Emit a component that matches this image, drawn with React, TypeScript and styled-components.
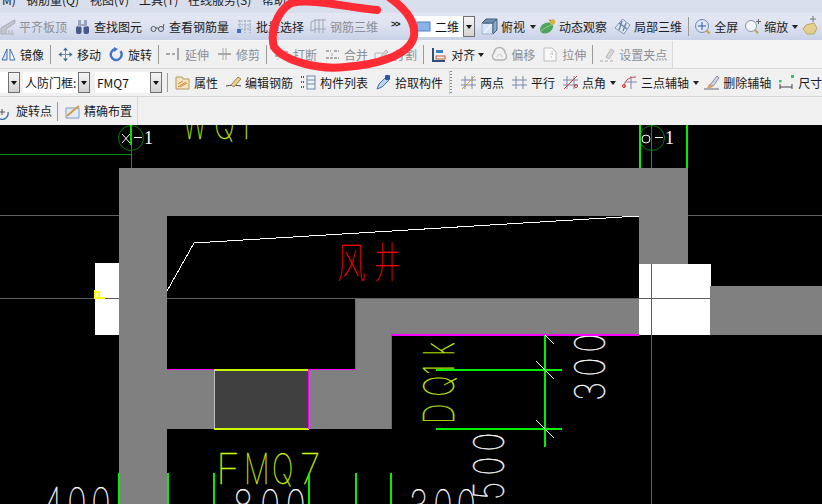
import React from "react";
import styled, { createGlobalStyle } from "styled-components";

const Global = createGlobalStyle`
  html, body { margin: 0; padding: 0; background: #000; overflow: hidden; }
  body { width: 822px; height: 504px; }
`;

const Page = styled.div`
  position: relative;
  width: 822px;
  height: 504px;
  overflow: hidden;
  display: flex;
  flex-direction: column;
  font-family: "Noto Sans CJK SC", "Liberation Sans", sans-serif;
  font-size: 12px;
  color: #1c1c1c;
  background: #f0f0f0;
`;

const MenuBar = styled.div`
  height: 13px;
  flex: none;
  display: flex;
  align-items: flex-start;
  overflow: hidden;
  background: #d9deec;
  padding-left: 2px;
`;

const MenuItem = styled.span<{ $w: number }>`
  flex: none;
  width: ${(p) => p.$w}px;
  line-height: 15px;
  height: 15px;
  margin-top: -8px;
  white-space: nowrap;
  color: #222;
`;

const Bar = styled.div<{ $h: number; $end?: number }>`
  height: ${(p) => p.$h}px;
  flex: none;
  width: ${(p) => (p.$end ? `${p.$end}px` : "822px")};
  box-sizing: border-box;
  display: flex;
  align-items: center;
  overflow: hidden;
  white-space: nowrap;
  gap: 8px;
`;

const MainBar = styled(Bar)`
  background: linear-gradient(#e3e7f3, #dfe4f1 40%, #c8d1e7);
  border-bottom: 1px solid #f4f6fb;
  padding-left: 0;
`;

const EditBar = styled(Bar)`
  background: #f0f0f0;
  border-right: 1px solid #dadada;
  padding-left: 1px;
`;

const RowWrap = styled.div`
  flex: none;
  background: #f4f4f4;
  border-bottom: 1px solid #d9d9d9;
`;

const DrawBar = styled(Bar)`
  background: #f0f0f0;
  border-bottom: 1px solid #d7d7d7;
`;

const LastBar = styled(Bar)`
  background: #f0f0f0;
  border-right: 1px solid #d9d9d9;
  padding-left: 0;
`;

const LastWrap = styled.div`
  height: 28px;
  flex: none;
  background: #f0f0f0;
`;

const Tool = styled.span<{ $off?: boolean; $lead?: number }>`
  flex: none;
  display: inline-flex;
  align-items: center;
  gap: 4px;
  margin-left: ${(p) => p.$lead ?? 0}px;
  color: ${(p) => (p.$off ? "#8b8f98" : "#1c1c24")};
  line-height: 16px;
`;

const IconBox = styled.svg`
  flex: none;
  width: 15px;
  height: 15px;
  display: block;
  overflow: visible;
`;

const Sep = styled.span<{ $lead?: number }>`
  flex: none;
  width: 1px;
  height: 19px;
  margin: 0 0 0 ${(p) => p.$lead ?? -2}px;
  background: #9a9a9a;
`;

const Caret = styled.span<{ $lead?: number }>`
  flex: none;
  width: 0;
  height: 0;
  margin-left: ${(p) => p.$lead ?? -3}px;
  border-left: 3.5px solid transparent;
  border-right: 3.5px solid transparent;
  border-top: 4px solid #222;
`;

const More = styled.span`
  flex: none;
  width: 10px;
  margin-left: 5px;
  margin-top: -6px;
  font: bold 9px/10px "Liberation Sans", sans-serif;
  letter-spacing: -1px;
  color: #111;
`;

const Combo = styled.span<{ $w: number; $lead?: number }>`
  flex: none;
  box-sizing: border-box;
  width: ${(p) => p.$w}px;
  height: 21px;
  margin-left: ${(p) => p.$lead ?? 0}px;
  display: flex;
  align-items: center;
  background: #fff;
  overflow: hidden;
`;

const ComboText = styled.span`
  flex: 1;
  min-width: 0;
  overflow: hidden;
  padding-left: 2px;
  color: #111;
  display: flex;
  align-items: center;
  gap: 4px;
`;

const ComboBtn = styled.span`
  flex: none;
  box-sizing: border-box;
  width: 12px;
  height: 21px;
  border: 1px solid #6f6f6f;
  background: linear-gradient(#f6f6f6, #d2d2d2);
  display: flex;
  align-items: center;
  justify-content: center;
  &::after {
    content: "";
    border-left: 3.5px solid transparent;
    border-right: 3.5px solid transparent;
    border-top: 4px solid #111;
  }
`;

const Grip = styled.span`
  flex: none;
  width: 2px;
  height: 24px;
  margin: 0 2px 0 -2px;
  border-left: 1px solid #d0d0d0;
  background: repeating-linear-gradient(#8a8a8a 0 1px, transparent 1px 3px);
`;

const Canvas = styled.svg`
  display: block;
  flex: none;
  width: 822px;
  height: 379px;
  background: #000;
`;

const CadText = styled.text<{ $c?: string }>`
  font-family: Inter, "Liberation Sans", sans-serif;
  font-weight: 100;
  font-size: 42px;
  fill: ${(p) => p.$c ?? "#fff"};
  stroke: ${(p) => p.$c ?? "#fff"};
  stroke-width: 0.35;
`;

const RedText = styled.text`
  font-family: "Noto Sans CJK SC", sans-serif;
  font-weight: 100;
  font-size: 42px;
  fill: #f00;
`;

const AxisText = styled.text`
  font-family: "Liberation Serif", serif;
  font-size: 18px;
  fill: #fff;
`;

const Annotation = styled.svg`
  position: absolute;
  left: 0;
  top: 0;
  pointer-events: none;
`;

const S = ({ children }: { children: React.ReactNode }) => (
  <IconBox viewBox="0 0 15 15" fill="none" strokeWidth="1">
    {children}
  </IconBox>
);

const icons: Record<string, React.ReactNode> = {
  level: <><path d="M1 15V9l10-6 4-2v3l-9 6v5z" fill="#c3c7cd" stroke="#a8acb2" /><path d="M7 15h7M9 11v3M12 11v3" stroke="#a8acb2" /></>,
  find: <><rect x="1" y="7" width="5.500" height="8" rx="2" fill="#46598a" /><rect x="8.500" y="7" width="5.500" height="8" rx="2" fill="#46598a" /><rect x="3" y="1" width="3" height="7" fill="#9aa5c0" /><rect x="9" y="1" width="3" height="7" fill="#9aa5c0" /><path d="M6 6h3" stroke="#666" /></>,
  glasses: <><circle cx="3.500" cy="10" r="2.500" stroke="#555" /><circle cx="11" cy="10" r="2.500" stroke="#555" /><path d="M6 9h2.500M13 9l1-4" stroke="#555" /></>,
  batch: <><path d="M1 2h13M1 6h13M1 10h13M3 1v13M8 1v13M13 1v13" stroke="#9ba6bd" strokeDasharray="2 1" /><rect x="0" y="10" width="4" height="4" fill="#3f6fc4" /></>,
  rebar: <><path d="M0 3l5-2h10M0 12l5-2h10M4 0v14M8 0v14M12 0v14M0 3v9" stroke="#9ea6b8" /></>,
  cube: <><path d="M0 4l4-4h11v11l-4 4H0z" fill="#d7e6f4" /><path d="M0 4h11v11M11 4l4-4" stroke="#45607e" /><path d="M0 4l4-4h11l-4 4z" fill="#6d8fb0" stroke="#45607e" /><path d="M11 4l4-4v11l-4 4z" fill="#8eaac6" stroke="#45607e" /><path d="M0 4v11h11" stroke="#9cb4cc" /><path d="M2 14L10 5" stroke="#fff" /></>,
  orbit: <><ellipse cx="6.500" cy="9" rx="7" ry="5" fill="#4ea55e" transform="rotate(-28 6.500 9)" /><path d="M1 12C4 9 9 7 13 5" stroke="#9fd08f" /><circle cx="12.500" cy="3" r="2.800" fill="#d0b848" /><path d="M9 1l2 1" stroke="#8a7a30" /></>,
  local3d: <><path d="M7.500 0l7.500 6-6 9-9-6z" fill="#dfe8f6" stroke="#7d95ba" /><path d="M4 4l8 6M7 2L4 11M11 4l-3 8" stroke="#6b83a8" strokeWidth="1.400" /></>,
  fullscreen: <><circle cx="7" cy="7" r="6.500" fill="#dce6f6" stroke="#7089b0" /><path d="M7 3v8M3 7h8" stroke="#2c5aa0" /><path d="M11.500 11.500l3 3" stroke="#c9a23c" strokeWidth="2" /></>,
  zoom: <><circle cx="6" cy="7" r="5.500" fill="#f2f5fa" stroke="#8a97aa" /><path d="M10 11l3 3" stroke="#c9a23c" strokeWidth="2" /><path d="M13.500 0v5M11 2.500h5" stroke="#666" /></>,
  hand: <><path d="M1 10l3-4 8-2 3 5-3 6H5z" fill="#e3cf8e" stroke="#c0a860" /><path d="M11 -3v6M8 0h6" stroke="#778" /></>,
  mirror: <><path d="M6 2v11H1z" stroke="#3f6fb0" fill="#d8e4f4" /><path d="M9 2v11h5z" stroke="#3f6fb0" fill="#fff" /></>,
  move: <><path d="M7.500 1v13M1 7.500h13" stroke="#6d8db0" /><path d="M5 3.500l2.500-3 2.500 3zM5 11.500l2.500 3 2.500-3zM3.500 5l-3 2.500 3 2.500zM11.500 5l3 2.500-3 2.500z" fill="#3d6a9c" /></>,
  rotate: <><path d="M11.500 4a5.500 5.500 0 1 1-5-2" stroke="#3f74c8" strokeWidth="2.400" /><path d="M5 0l4 2-4 3z" fill="#3f74c8" /></>,
  extend: <><path d="M0 7h4M6 7h3" stroke="#a8a8a8" strokeWidth="2" /><path d="M12 1v12" stroke="#a8a8a8" strokeWidth="2" /></>,
  trim: <><path d="M1 7h13" stroke="#a8a8a8" strokeWidth="2" /><path d="M6 1v12M9 1v12" stroke="#a8a8a8" /></>,
  breakl: <><path d="M1 9h5M9 5h5" stroke="#adadad" strokeWidth="2" /><path d="M3 13l9-10" stroke="#c4c4c4" /></>,
  merge: <><path d="M1 4h5M9 4h5M1 11h13" stroke="#adadad" strokeWidth="2" strokeDasharray="3 1" /><path d="M7 6v3" stroke="#adadad" /></>,
  split: <><path d="M1 13V6h8" stroke="#b8b8b8" /><path d="M5 12l7-9 2 2-7 8z" fill="#d8d8d8" stroke="#b0b0b0" /></>,
  align: <><path d="M1 1v13h12" stroke="#2c4f80" strokeWidth="2" /><rect x="4" y="3" width="7" height="3" fill="#3c7fc4" /><rect x="4" y="9" width="9" height="3" stroke="#c05a3a" /></>,
  offset: <><path d="M3 13a4 4 0 0 1-1-7 5.500 5.500 0 0 1 11 0 4 4 0 0 1-1 7z" stroke="#b4b4b4" strokeWidth="1.500" /><path d="M5 10a2 2 0 0 1 5 0" stroke="#c8c8c8" /></>,
  stretch: <><path d="M1 1h8l4 4v9H1z" stroke="#bdbdbd" fill="#f8f8f8" /><path d="M7 7h3M8 10h2M9 4v3" stroke="#aaa" strokeDasharray="1 1" /></>,
  grip: <><path d="M0 14h3M5 14h3M10 14h3" stroke="#aaa" /><path d="M6 10l5-8 3 2-5 8z" fill="#d9d9d9" stroke="#b5b5b5" /></>,
  prop: <><path d="M1 2h6l1 2h6v10H1z" fill="#f8e3bc" stroke="#b49660" /><path d="M3 12l8-5M5 12l7-4M3 9l5-3" stroke="#c98c3a" /></>,
  edit: <><path d="M0 11c4-1 10-1 15 0" stroke="#444" /><path d="M5 10l7-8 3 2-7 8z" fill="#e8d285" stroke="#9a8a55" /></>,
  list: <><path d="M0 2h3M0 7h3M0 12h3" stroke="#555" strokeDasharray="1 1" strokeWidth="2" /><rect x="6" y="1" width="8" height="13" stroke="#6c86ab" fill="#eef3fa" /><path d="M6 5h8M6 9h8" stroke="#6c86ab" /></>,
  pick: <><path d="M1 14l2-5 7-7 3 3-7 7z" fill="#bcd4f2" stroke="#3f6fb0" /><rect x="9" y="0" width="5" height="5" rx="1" fill="#2b5aa0" /></>,
  twoPt: <><path d="M4 1v13M11 1v13M0 5h15M0 10h15" stroke="#7d86aa" /><path d="M1 14L14 1" stroke="#c6a23c" /></>,
  parallel: <><path d="M4 1v13M11 1v13M0 5h15M0 10h15" stroke="#7d86aa" /></>,
  angle: <><path d="M4 1v13M11 1v13M0 5h15M0 10h15" stroke="#7d86aa" /><path d="M1 14L14 1" stroke="#cc3a3a" /><circle cx="13" cy="11" r="1.500" stroke="#cc3a3a" /></>,
  arc: <><path d="M2 13C2 6 6 2 14 2" stroke="#cc3a3a" /><path d="M9 1v13M3 7h12" stroke="#7d86aa" /><circle cx="2" cy="11" r="1.500" stroke="#cc3a3a" /></>,
  del: <><path d="M0 14h15" stroke="#667" /><path d="M6 10l7-9 2 2-6 8z" fill="#cfd8e8" stroke="#8a8a9a" /><path d="M3 13l2-4 4 2-2 2z" fill="#e0a070" /></>,
  dim: <><path d="M1 9v5M13 9v5M1 12h12" stroke="#444" /><rect x="0" y="5" width="2.500" height="2.500" fill="#36c46a" /><rect x="12" y="0" width="3" height="3" fill="#36c46a" /></>,
  pivot: <><path d="M1 5a6 6 0 1 0 10 3" stroke="#3f6fb0" strokeWidth="1.400" /><path d="M5 5v6M2 8h6" stroke="#555" /></>,
  place: <><path d="M1 4h13v10H1z" fill="#dfeafa" stroke="#7f9cc4" /><path d="M2 12l8-7 4-3" stroke="#d0a040" strokeWidth="2" /></>,
};

const T = ({ i, t, off, lead }: { i: string; t: string; off?: boolean; lead?: number }) => (
  <Tool $off={off} $lead={lead}>
    <S>{icons[i]}</S>
    {t}
  </Tool>
);

const Line = ({ d, c, w = 1 }: { d: string; c: string; w?: number }) => (
  <path d={d} stroke={c} strokeWidth={w} fill="none" shapeRendering="crispEdges" />
);

const App = () => (
  <Page>
    <Global />
    <MenuBar>
      <MenuItem $w={24}>M)</MenuItem>
      <MenuItem $w={64}>钢筋量(Q)</MenuItem>
      <MenuItem $w={49}>视图(V)</MenuItem>
      <MenuItem $w={49}>工具(T)</MenuItem>
      <MenuItem $w={74}>在线服务(S)</MenuItem>
      <MenuItem $w={40}>帮助</MenuItem>
    </MenuBar>

    <MainBar $h={28}>
      <T i="level" t="平齐板顶" off lead={0} />
      <T i="find" t="查找图元" />
      <T i="glasses" t="查看钢筋量" />
      <T i="batch" t="批量选择" />
      <T i="rebar" t="钢筋三维" off lead={-1} />
      <More>&gt;&gt;</More>
      <Combo $w={61} $lead={5}>
        <ComboText>
          <IconBox viewBox="0 0 15 15">
            <rect x="1" y="3" width="13" height="9" fill="#8ab4e8" stroke="#4f7fc0" />
          </IconBox>
          二维
        </ComboText>
        <ComboBtn />
      </Combo>
      <T i="cube" t="俯视" lead={-1} />
      <Caret $lead={-3} />
      <T i="orbit" t="动态观察" lead={-4} />
      <T i="local3d" t="局部三维" />
      <Sep $lead={-2} />
      <T i="fullscreen" t="全屏" lead={-2} />
      <T i="zoom" t="缩放" lead={-1} />
      <Caret $lead={-4} />
      <T i="hand" t="" lead={-4} />
    </MainBar>

    <RowWrap>
      <EditBar $h={27} $end={673}>
        <T i="mirror" t="镜像" />
        <Sep $lead={-2} />
        <T i="move" t="移动" lead={-1} />
        <T i="rotate" t="旋转" />
        <Sep $lead={-2} />
        <T i="extend" t="延伸" off lead={-1} />
        <T i="trim" t="修剪" off />
        <Sep $lead={-2} />
        <T i="breakl" t="打断" off lead={-1} />
        <T i="merge" t="合并" off />
        <T i="split" t="分割" off lead={-2} />
        <Sep $lead={-2} />
        <T i="align" t="对齐" lead={0} />
        <Caret $lead={-5} />
        <T i="offset" t="偏移" off lead={0} />
        <T i="stretch" t="拉伸" off />
        <Sep $lead={-2} />
        <T i="grip" t="设置夹点" off lead={-1} />
      </EditBar>
    </RowWrap>

    <DrawBar $h={28}>
      <Combo $w={20}>
        <ComboText />
        <ComboBtn />
      </Combo>
      <Combo $w={67} $lead={-5}>
        <ComboText>人防门框:</ComboText>
        <ComboBtn />
      </Combo>
      <Combo $w={67} $lead={-3}>
        <ComboText>FMQ7</ComboText>
        <ComboBtn />
      </Combo>
      <Sep $lead={-3} />
      <T i="prop" t="属性" lead={-1} />
      <T i="edit" t="编辑钢筋" />
      <T i="list" t="构件列表" />
      <T i="pick" t="拾取构件" />
      <Grip />
      <T i="twoPt" t="两点" lead={-1} />
      <T i="parallel" t="平行" />
      <T i="angle" t="点角" />
      <Caret $lead={-4} />
      <T i="arc" t="三点辅轴" lead={-2} />
      <Caret $lead={-4} />
      <T i="del" t="删除辅轴" lead={-3} />
      <T i="dim" t="尺寸标注" />
    </DrawBar>

    <LastWrap>
      <LastBar $h={28} $end={138}>
        <Tool $lead={-3}>
          <S>{icons.pivot}</S>
          旋转点
        </Tool>
        <Sep $lead={-3} />
        <T i="place" t="精确布置" lead={-1} />
      </LastBar>
    </LastWrap>

    <Canvas viewBox="0 125 822 379">
      {/* text lying partly behind the walls */}
      <CadText $c="#c8f500" transform="translate(183 139) scale(.6 1)">W</CadText>
      <CadText $c="#c8f500" transform="translate(214 139) scale(.66 1)">Q</CadText>
      <CadText $c="#c8f500" transform="translate(239 139) scale(.72 1)">1</CadText>

      <CadText transform="translate(605 401) rotate(-90) scale(.78 1)" x="0 31 62">300</CadText>
      <CadText $c="#c8f500" transform="translate(454 424) rotate(-90) scale(.68 1)" x="0 40 72 100">DQ1k</CadText>
      <CadText transform="translate(504 500) rotate(-90) scale(.78 1)" x="0 31 62">500</CadText>

      {/* grid */}
      <Line d="M0 215.500H119M688 215.500H822" c="#606060" />
      <Line d="M131.500 125V168" c="#606060" />

      {/* walls */}
      <g fill="#808080" shapeRendering="crispEdges">
        <rect x="119" y="168" width="569" height="48" />
        <rect x="119" y="168" width="48" height="336" />
        <rect x="639" y="168" width="49" height="96" />
        <rect x="356" y="298" width="283" height="37" />
        <rect x="356" y="298" width="36" height="131" />
        <rect x="167" y="370" width="225" height="59" />
      </g>
      <g fill="#fff" shapeRendering="crispEdges">
        <rect x="95" y="263" width="24" height="72" />
        <rect x="639" y="264" width="72" height="71" />
      </g>
      <rect x="710" y="286" width="112" height="49" fill="#808080" shapeRendering="crispEdges" />
      <rect x="214" y="370" width="95" height="59" fill="#404040" shapeRendering="crispEdges" />

      <Line d="M0 298.500H119M167 298.500H710" c="#606060" />
      <Line d="M651.500 125V168M651.500 264V504" c="#606060" />

      {/* door and wall edges */}
      <Line d="M214 369.500H309M214 428.500H309" c="#c8f500" w={2} />
      <Line d="M214.500 370V428" c="#c0c0c0" />
      <Line d="M308.500 369V429M355.500 298V370M167 369.500H214M309 369.500H356M391.500 334V429" c="#f0f" />
      <Line d="M392 334.500H639" c="#f0f" w={2} />
      <path d="M95 290v8h10M96 292h3v5" stroke="#ff0" strokeWidth="2" fill="none" shapeRendering="crispEdges" />

      {/* outline */}
      <path d="M167 291L194 243L639 216" stroke="#fff" strokeWidth="1" fill="none" shapeRendering="crispEdges" />
      <RedText transform="translate(337 278) scale(.68 1.030)">风</RedText>
      <RedText transform="translate(374 278) scale(.62 1.030)">井</RedText>

      {/* axis markers */}
      <circle cx="131" cy="138" r="12.500" stroke="#008000" fill="none" />
      <circle cx="652" cy="138" r="12.500" stroke="#008000" fill="none" />
      <Line d="M0 154.500H131" c="#009000" />
      <Line d="M130.500 125V145" c="#00e000" w={2} />
      <Line d="M640 125V168M687 125V168" c="#00f000" w={2} />
      <Line d="M134 137.500H142M655 137.500H663" c="#fff" />
      <path d="M122 134l8 9M130 134l-8 9" stroke="#fff" fill="none" />
      <circle cx="646" cy="139" r="4" stroke="#fff" fill="none" />
      <AxisText x="144" y="144">1</AxisText>
      <AxisText x="665" y="144">1</AxisText>

      {/* dimension */}
      <Line d="M436 370H562M436 429H562M545 335V447" c="#00f000" w={2} />
      <path d="M536 361l18 18M536 420l18 18M545 335l9 9" stroke="#fff" fill="none" shapeRendering="crispEdges" />

      <CadText $c="#c8f500" transform="translate(216 484) scale(.98 1)">F</CadText>
      <CadText $c="#c8f500" transform="translate(244 484) scale(.68 1)">M</CadText>
      <CadText $c="#c8f500" transform="translate(272 484) scale(.68 1)">Q</CadText>
      <CadText $c="#c8f500" transform="translate(300 484) scale(.88 1)">7</CadText>
      <CadText transform="translate(43 518) scale(.78 1)" x="0 31 62">400</CadText>
      <CadText transform="translate(233 520) scale(.8 1)" x="0 34 66">800</CadText>
      <CadText transform="translate(409 520) scale(.78 1)" x="0 31 61">300</CadText>

      <Line d="M119 473V504M167.500 473V504M214 473V504M309 473V504M356 473V504M391 473V504" c="#00f000" w={2} />
    </Canvas>

    <Annotation width="822" height="504" viewBox="0 0 822 504">
      <path
        d="M377 10C345 7 312-2 291 3C276 12 270 33 274 47C284 61 318 70 345 67C375 65 410 56 414 36C416 19 402 6 386-5"
        stroke="#ff2b35"
        strokeWidth="8"
        strokeLinecap="round"
        fill="none"
      />
    </Annotation>
  </Page>
);

export default App;
